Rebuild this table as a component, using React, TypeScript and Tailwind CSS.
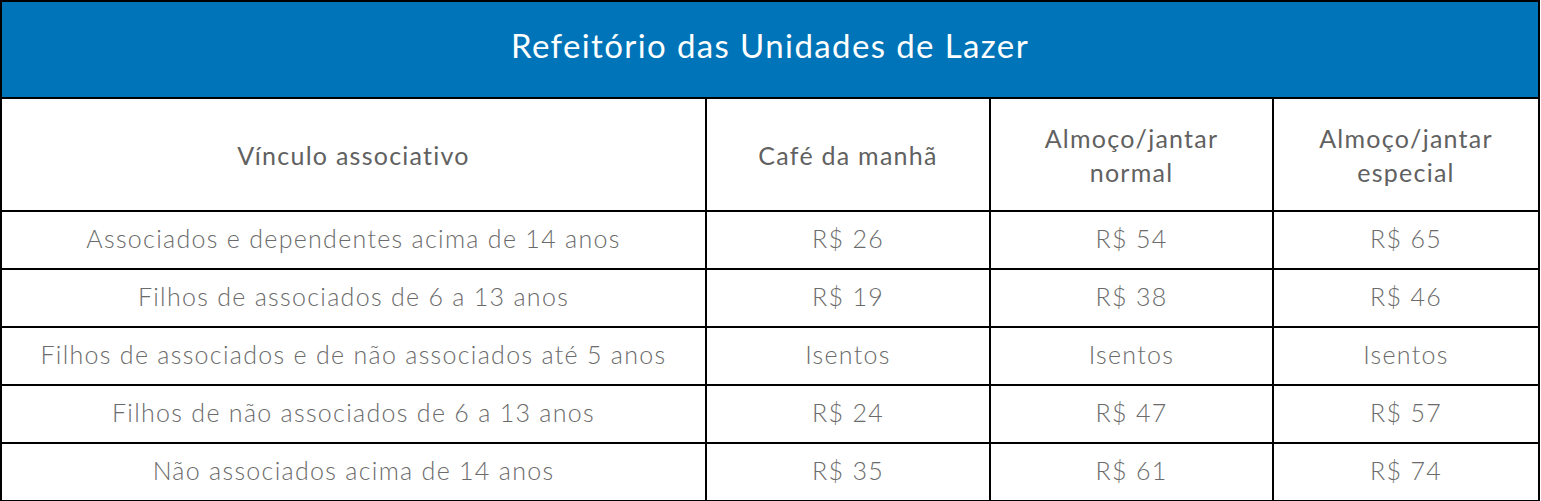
import React from "react";

const rows: [string, string, string, string][] = [
  ["Associados e dependentes acima de 14 anos", "R$ 26", "R$ 54", "R$ 65"],
  ["Filhos de associados de 6 a 13 anos", "R$ 19", "R$ 38", "R$ 46"],
  ["Filhos de associados e de não associados até 5 anos", "Isentos", "Isentos", "Isentos"],
  ["Filhos de não associados de 6 a 13 anos", "R$ 24", "R$ 47", "R$ 57"],
  ["Não associados acima de 14 anos", "R$ 35", "R$ 61", "R$ 74"],
  ["", "", "", ""],
];

export default function App() {
  return (
    <div className="w-[1541px] h-[501px] overflow-hidden bg-white" style={{ fontFamily: "Lato, 'Noto Sans', sans-serif" }}>
      <table className="table-fixed border-collapse w-[1538px]">
        <colgroup>
          <col className="w-[705px]" />
          <col className="w-[284px]" />
          <col className="w-[283px]" />
          <col className="w-[266px]" />
        </colgroup>
        <thead>
          <tr className="h-[97px]">
            <th colSpan={4} className="border-2 border-black bg-[#0074b8] text-white text-[33px] tracking-[0.042em] font-normal text-center pb-2">
              Refeitório das Unidades de Lazer
            </th>
          </tr>
          <tr className="h-[113px]">
            <th className="border-2 border-black text-[#616161] text-[25px] tracking-[0.05em] font-normal leading-[34px] text-center">Vínculo associativo</th>
            <th className="border-2 border-black text-[#616161] text-[25px] tracking-[0.05em] font-normal leading-[34px] text-center">Café da manhã</th>
            <th className="border-2 border-black text-[#616161] text-[25px] tracking-[0.05em] font-normal leading-[34px] text-center px-9">Almoço/jantar normal</th>
            <th className="border-2 border-black text-[#616161] text-[25px] tracking-[0.05em] font-normal leading-[34px] text-center px-9">Almoço/jantar especial</th>
          </tr>
        </thead>
        <tbody>
          {rows.map((r, i) => (
            <tr key={i} className="h-[58px]">
              {r.map((c, j) => (
                <td key={j} className="border-2 border-black text-[#6b6b6b] text-[25px] tracking-[0.052em] font-light text-center pb-0.5">
                  {c}
                </td>
              ))}
            </tr>
          ))}
        </tbody>
      </table>
    </div>
  );
}
